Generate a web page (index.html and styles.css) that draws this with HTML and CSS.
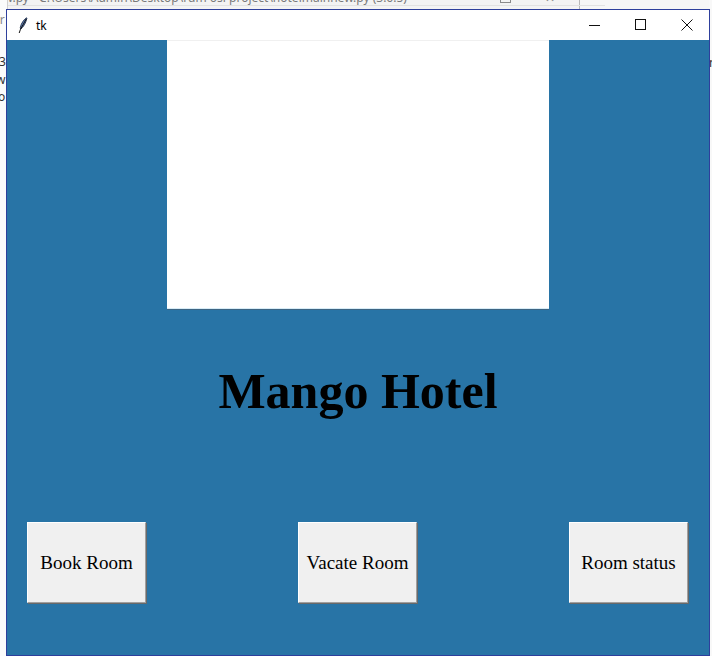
FILE: index.html
```html
<!DOCTYPE html>
<html>
<head>
<meta charset="utf-8">
<link rel="stylesheet" href="styles.css">
<title>tk</title>
</head>
<body>
<div class="desktop">
  <div class="back-window">
    <div class="back-title">ew.py - C:\Users\Admin\Desktop\rum osi project\hotelmainnew.py (3.6.5)</div>
    <div class="back-controls"><span class="back-max"></span><span class="back-close">✕</span></div>
  </div>
  <div class="back-strip"></div>
  <div class="left-peek">
    <span class="peek p1">er</span>
    <span class="peek p2">3</span>
    <span class="peek p3">w</span>
    <span class="peek p4">o</span>
  </div>
  <div class="right-peek"><span class="peek">n</span></div>

  <div class="window">
    <div class="titlebar">
      <svg class="feather" width="10" height="17" viewBox="0 0 10 17">
        <path d="M8.6 0.8 C6 2.5 3.2 6 2.3 10.5 L2.6 12.2 C5.5 10 7.8 6 8.9 1.2 Z" fill="#5d7fb8" stroke="#1d2a45" stroke-width="0.9"/>
        <path d="M8.2 2 L2.4 12.5 L1.2 16" fill="none" stroke="#111" stroke-width="1"/>
      </svg>
      <span class="title">tk</span>
      <div class="controls">
        <svg class="ctl" width="46" height="30" viewBox="0 0 46 30"><path d="M18 15.5 H29" stroke="#111" stroke-width="1"/></svg>
        <svg class="ctl" width="46" height="30" viewBox="0 0 46 30"><rect x="18.5" y="9.5" width="10" height="10" fill="none" stroke="#111" stroke-width="1"/></svg>
        <svg class="ctl" width="46" height="30" viewBox="0 0 46 30"><path d="M18.5 9.5 L29.5 20.5 M29.5 9.5 L18.5 20.5" stroke="#111" stroke-width="1"/></svg>
      </div>
    </div>
    <div class="content">
      <div class="canvas"></div>
      <h1 class="heading">Mango Hotel</h1>
      <div class="buttons">
        <button class="btn">Book Room</button>
        <button class="btn">Vacate Room</button>
        <button class="btn">Room status</button>
      </div>
    </div>
  </div>
</div>
</body>
</html>
```

FILE: styles.css
```css
* { box-sizing: border-box; }
html, body {
  margin: 0;
  padding: 0;
  width: 712px;
  height: 656px;
  overflow: hidden;
  background: #f4f4f4;
}
.desktop {
  position: relative;
  width: 712px;
  height: 656px;
  background: #f6f6f6;
  font-family: "Noto Sans", "Open Sans", sans-serif;
}
.back-window {
  position: absolute;
  left: -20px;
  top: -20px;
  width: 600px;
  height: 120px;
  background: #f3f3f3;
  border-right: 1px solid #b8b8b8;
  border-bottom: 1px solid #d8d8d8;
}
.back-title {
  position: absolute;
  left: 17px;
  top: 10px;
  font-size: 12px;
  line-height: 16px;
  color: #7a7a7a;
  white-space: nowrap;
}
.back-controls {
  position: absolute;
  left: 520px;
  top: 12px;
  display: flex;
  gap: 34px;
  color: #8a8a8a;
  font-size: 12px;
}
.back-max {
  display: block;
  width: 11px;
  height: 11px;
  border: 1px solid #8a8a8a;
}
.back-close { line-height: 12px; }
.back-strip {
  position: absolute;
  left: 0;
  top: 5px;
  width: 605px;
  height: 1px;
  background: #e2e2e2;
}
.left-peek {
  position: absolute;
  left: 0;
  top: 0;
  width: 8px;
  height: 656px;
  background: #fbfbfb;
  border-right: 1px solid #d0d0d0;
}
.peek {
  position: absolute;
  font-size: 12px;
  line-height: 14px;
  color: #333;
}
.p1 { top: 13px; left: -7px; color: #888; }
.p2 { top: 55px; left: -1px; }
.p3 { top: 73px; left: -4px; }
.p4 { top: 90px; left: -2px; }
.right-peek {
  position: absolute;
  left: 709px;
  top: 0;
  width: 3px;
  height: 656px;
  background: #f8f8f8;
}
.right-peek .peek { top: 56px; left: 0px; }

.window {
  position: absolute;
  left: 6px;
  top: 9px;
  width: 704px;
  height: 647px;
  border: 1px solid #2e3f9c;
  background: #2874a6;
  display: flex;
  flex-direction: column;
}
.titlebar {
  height: 30px;
  background: #ffffff;
  display: flex;
  align-items: center;
  flex-shrink: 0;
}
.feather {
  margin-left: 11px;
  margin-top: 1px;
}
.title {
  margin-left: 8px;
  font-size: 12px;
  color: #000;
  margin-top: 1px;
}
.controls {
  margin-left: auto;
  display: flex;
}
.ctl { display: block; }
.content {
  flex: 1;
  background: #2874a6;
  display: flex;
  flex-direction: column;
  align-items: center;
}
.canvas {
  width: 382px;
  height: 269px;
  background: #ffffff;
  border-top: 1px solid #f0f0f0;
  border-bottom: 1px solid #d8ecf6;
  box-shadow: 0 1px 0 #3d6584;
}
.heading {
  margin: 57px 0 0 0;
  font-family: "Liberation Serif", "Times New Roman", serif;
  font-weight: bold;
  font-size: 50px;
  line-height: 50px;
  color: #000;
  text-align: center;
}
.buttons {
  align-self: stretch;
  margin-top: 106px;
  padding: 0 21px 0 20px;
  display: flex;
  justify-content: space-between;
}
.btn {
  width: 119px;
  height: 81px;
  padding: 0;
  background: #f0f0f0;
  border-top: 1px solid #ffffff;
  border-left: 1px solid #ffffff;
  border-right: 1px solid #a0a0a0;
  border-bottom: 1px solid #a0a0a0;
  box-shadow: 1px 1px 0 #696969;
  font-family: "Liberation Serif", "Times New Roman", serif;
  font-size: 19px;
  color: #000;
  border-radius: 0;
  line-height: 1;
}
```
